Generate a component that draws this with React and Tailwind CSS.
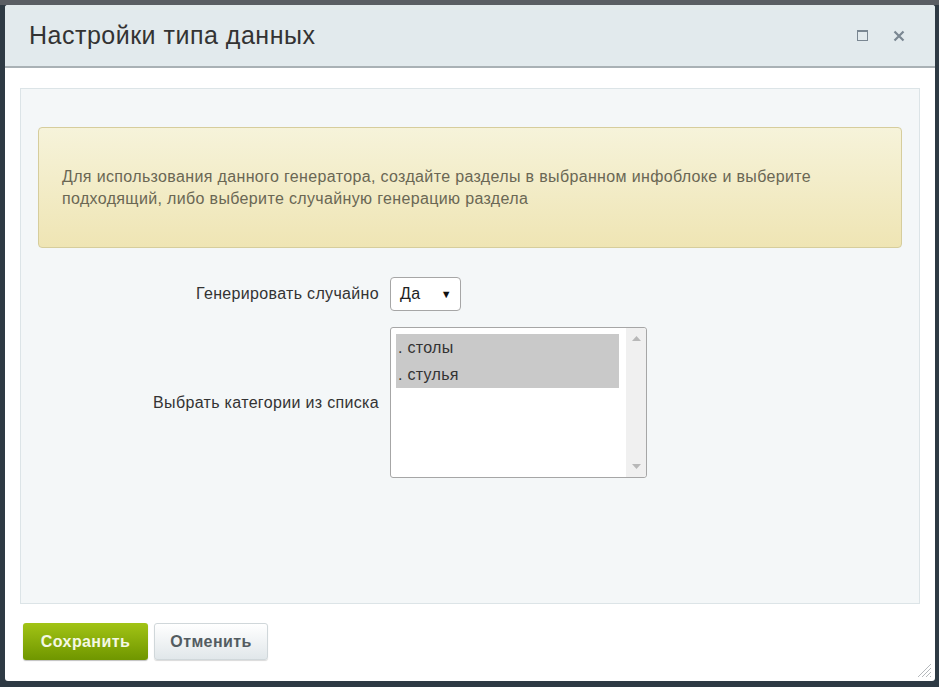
import React from "react";

const Resize = () => (
    <svg width="16" height="16" viewBox="0 0 16 16" className="absolute right-[3px] bottom-[3px]">
        <path d="M15 2 L2 15 M15 6 L6 15 M15 10 L10 15 M15 14 L14 15" stroke="#b5b9bc" strokeWidth="1" />
    </svg>
);

const App = () => {
    return (
        <div className="w-[939px] h-[687px] bg-[#2e3a44] overflow-hidden" style={{ fontFamily: '"Liberation Sans", Arial, sans-serif' }}>
            <div className="h-[5px] bg-[#5a5e64]" />
            <div className="relative ml-[5px] w-[930px] h-[676px] bg-white rounded-[3px] flex flex-col">
                {/* Header */}
                <div className="h-[63px] shrink-0 bg-[#e2eaed] border-b-2 border-[#a9b1b5] rounded-t-[3px] flex items-center pl-[24px] pr-[30px]">
                    <h1 className="text-[25px] text-[#333] tracking-[0.5px] flex-1">Настройки типа данных</h1>
                    <div className="flex items-center gap-[25px]">
                        <div className="w-[11px] h-[11px] border border-[#7a8792] border-t-2" />
                        <svg width="12" height="12" viewBox="0 0 12 12">
                            <path d="M1.5 1.5 L10.5 10.5 M10.5 1.5 L1.5 10.5" stroke="#7a8792" strokeWidth="2.2" />
                        </svg>
                    </div>
                </div>

                {/* Content panel */}
                <div className="mx-[15px] mt-[20px] h-[516px] bg-[#f4f7f8] border border-[#dce4e7] px-[17px] pt-[38px]">
                    <div className="h-[121px] rounded-[4px] border border-[#d6cd9c] bg-gradient-to-b from-[#f6f3da] to-[#efe5b4] flex items-center pl-[23px] pr-[20px]">
                        <p className="text-[16px] leading-[22px] tracking-[0.35px] text-[#6a6754]">
                            Для использования данного генератора, создайте разделы в выбранном инфоблоке и выберите
                            <br />
                            подходящий, либо выберите случайную генерацию раздела
                        </p>
                    </div>

                    <div className="mt-[29px] grid grid-cols-[341px_1fr] gap-x-[11px] gap-y-[16px] items-center text-[16px] tracking-[0.33px] text-[#333]">
                        <div className="text-right">Генерировать случайно</div>
                        <div>
                            <div className="w-[71px] h-[34px] bg-white border border-[#a6a6a6] rounded-[4px] flex items-center justify-between pl-[9px] pr-[8px] text-[#222]">
                                <span>Да</span>
                                <span className="text-[11px] text-[#111]">▼</span>
                            </div>
                        </div>

                        <div className="text-right">Выбрать категории из списка</div>
                        <div>
                            <div className="w-[257px] h-[151px] bg-white border border-[#a6a6a6] rounded-[3px] flex">
                                <div className="flex-1 pl-[5px] pt-[6px]">
                                    <div className="bg-[#c9c9c9] text-[#333] text-[16px] tracking-[0.3px] w-[223px]">
                                        <div className="h-[27px] flex items-center pl-[2px]">. столы</div>
                                        <div className="h-[27px] flex items-center pl-[2px]">. стулья</div>
                                    </div>
                                </div>
                                <div className="w-[20px] bg-[#f0f0f0] flex flex-col justify-between items-center py-[8px] rounded-r-[3px]">
                                    <svg width="9" height="5" viewBox="0 0 9 5"><path d="M0 5 L4.5 0 L9 5 Z" fill="#b8b8b8" /></svg>
                                    <svg width="9" height="5" viewBox="0 0 9 5"><path d="M0 0 L4.5 5 L9 0 Z" fill="#b8b8b8" /></svg>
                                </div>
                            </div>
                        </div>
                    </div>
                </div>

                {/* Buttons */}
                <div className="flex gap-[6px] ml-[18px] mt-[19px]">
                    <button className="w-[125px] h-[37px] rounded-[3px] bg-gradient-to-b from-[#a2c415] to-[#6f9600] text-[#f4f8e4] text-[16px] tracking-[0.4px] font-bold shadow-[0_1px_1px_rgba(0,0,0,0.25)]">
                        Сохранить
                    </button>
                    <button className="w-[114px] h-[37px] rounded-[3px] bg-gradient-to-b from-white to-[#e1e7ea] border border-[#d0d7da] text-[#535c61] text-[16px] tracking-[0.4px] font-bold shadow-[0_1px_1px_rgba(0,0,0,0.15)]">
                        Отменить
                    </button>
                </div>

                <Resize />
            </div>
        </div>
    );
};

export default App;
